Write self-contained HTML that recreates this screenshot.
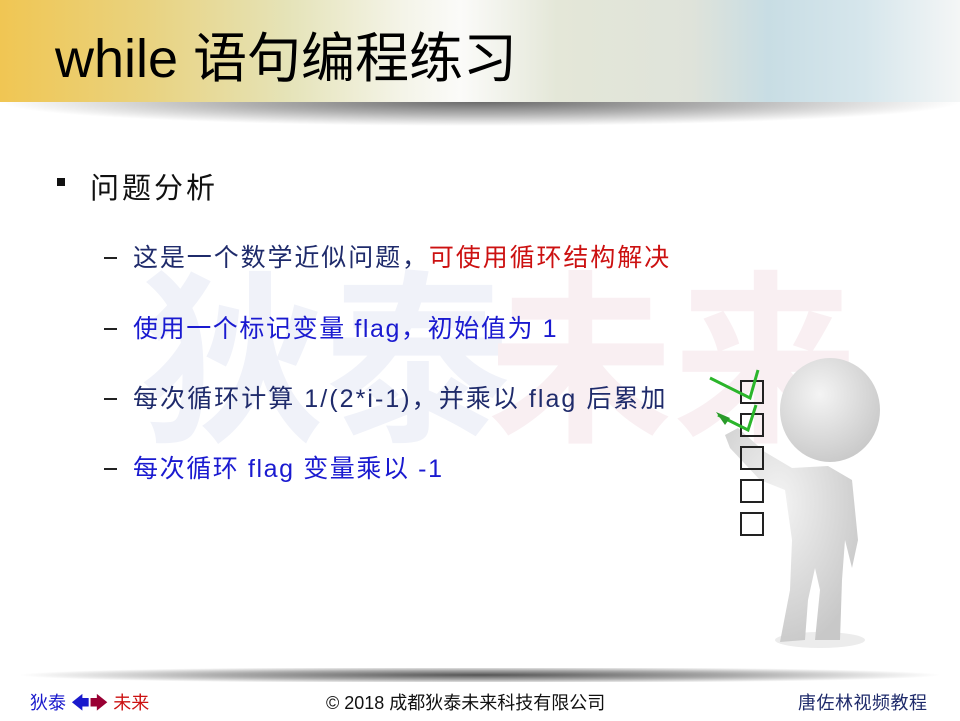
<!DOCTYPE html>
<html><head><meta charset="utf-8"><style>
*{margin:0;padding:0}
body{width:960px;height:720px;position:relative;overflow:hidden;background:#fff;font-family:"Liberation Sans","Noto Sans CJK SC",sans-serif}
.hdr{position:absolute;left:0;top:0;width:960px;height:102px;background:linear-gradient(90deg,#f0c653 0%,#e9d27e 15%,#e5e3b8 30%,#f4f4e8 42%,#fbfbf9 48%,#e4e7d8 58%,#dfe3da 72%,#c8dde4 80%,#d6e6ec 90%,#f4f6f6 100%)}
.shadow{position:absolute;left:0;top:102px;width:960px;height:24px;background:radial-gradient(ellipse 50% 100% at 50% 0%,#6a6a6a 0%,#b0b0b0 50%,rgba(255,255,255,0) 100%)}
.title{position:absolute;left:55px;top:14px;font-size:54px;color:#000;white-space:nowrap}
.wm{position:absolute;top:272px;font-size:185px;font-weight:bold;line-height:1}
.t{position:absolute;white-space:nowrap}
.s{font-size:25px;left:133px}
.d{position:absolute;left:104px;width:13px;height:2px;background:#222}
.foot{position:absolute;left:0;top:668px;width:960px;height:14px;background:radial-gradient(ellipse 48% 60% at 50% 50%,#555 0%,#aaa 55%,rgba(255,255,255,0) 100%)}
</style></head><body>
<div class="hdr"></div><div class="shadow"></div>
<div class="title">while 语句编程练习</div>
<div class="wm" style="left:140px;color:#f0f2f9">狄泰</div>
<div class="wm" style="left:488px;color:#f9eff2">未来</div>
<div style="position:absolute;left:57px;top:178px;width:8px;height:8px;background:#111"></div>
<div class="t" style="left:90px;top:165px;font-size:29px;color:#111;letter-spacing:3px">问题分析</div>
<div class="d" style="top:257px"></div><div class="t s" style="top:238px;color:#1f2b6b;letter-spacing:1.9px">这是一个数学近似问题，<span style="color:#cc1111">可使用循环结构解决</span></div>
<div class="d" style="top:328px"></div><div class="t s" style="top:309px;color:#1a1ad0;letter-spacing:1.6px">使用一个标记变量 flag，初始值为 1</div>
<div class="d" style="top:398px"></div><div class="t s" style="top:379px;color:#1f2b6b;letter-spacing:2.05px">每次循环计算 1/(2*i-1)，并乘以 flag 后累加</div>
<div class="d" style="top:468px"></div><div class="t s" style="top:449px;color:#1a1ad0;letter-spacing:1.6px">每次循环 flag 变量乘以 -1</div>
<svg style="position:absolute;left:680px;top:340px" width="200" height="320" viewBox="0 0 200 320">
<defs><radialGradient id="g" cx="40%" cy="35%" r="70%"><stop offset="0" stop-color="#f4f4f4"/><stop offset="1" stop-color="#c8c8c8"/></radialGradient></defs>
<ellipse cx="140" cy="300" rx="45" ry="8" fill="#ececec"/>
<path d="M45 95 L58 88 L85 112 L112 128 L148 126 L172 140 L178 200 L172 228 L165 200 L162 240 L160 300 L135 300 L140 250 L135 228 L128 260 L125 300 L100 302 L110 250 L112 200 L105 150 L80 140 L50 108 Z" fill="url(#g)"/>
<ellipse cx="150" cy="70" rx="50" ry="52" fill="url(#g)"/>
<g fill="none" stroke="#222" stroke-width="2"><rect x="61" y="41" width="22" height="22"/><rect x="61" y="74" width="22" height="22"/><rect x="61" y="107" width="22" height="22"/><rect x="61" y="140" width="22" height="22"/><rect x="61" y="173" width="22" height="22"/></g>
<g fill="none" stroke="#2bb52b" stroke-width="3"><path d="M30 38 L70 58 L78 30"/><path d="M38 75 L68 90 L76 65"/></g>
<path d="M36 72 L50 78 L45 85 Z" fill="#2a9a2a"/>
</svg>
<div class="foot"></div>
<div class="t" style="left:30px;top:689px;font-size:18px;color:#1a1acc">狄泰 <span style="color:#1a1acc">🡄</span><span style="color:#990033">🡆</span> <span style="color:#cc1111">未来</span></div>
<div class="t" style="left:326px;top:689px;font-size:18px;color:#111">© 2018 成都狄泰未来科技有限公司</div>
<div class="t" style="left:798px;top:689px;font-size:18px;color:#1f2b6b;letter-spacing:0.5px">唐佐林视频教程</div>
</body></html>
